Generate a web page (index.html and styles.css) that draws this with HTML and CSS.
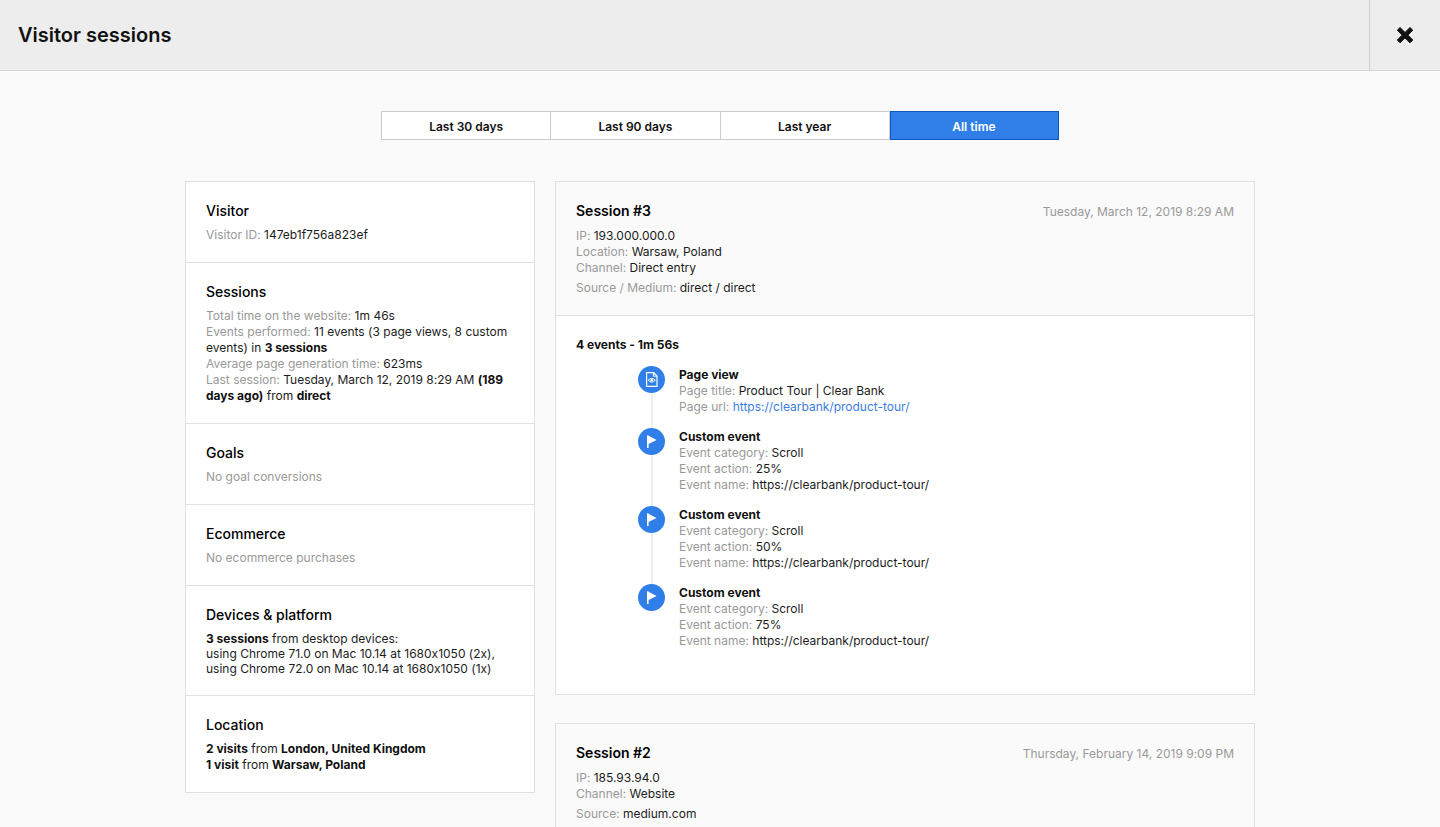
FILE: index.html
```html
<!DOCTYPE html>
<html lang="en">
<head>
<meta charset="utf-8">
<meta name="viewport" content="width=device-width, initial-scale=1">
<title>Visitor sessions</title>
<link rel="stylesheet" href="styles.css">
</head>
<body>
<svg class="sprite" aria-hidden="true">
  <symbol id="icon-flag" viewBox="0 0 27 27">
    <path d="M9 7.2H10.6V20H9Z M10 7.6L18.6 12L10 16.2Z" fill="#fff"/>
  </symbol>
  <symbol id="icon-page" viewBox="0 0 27 27">
    <g fill="none" stroke="#fff">
      <path d="M8.6 6.7H15.6L19 10V20.3H8.6Z" stroke-width="1.2"/>
      <path d="M15.4 6.9V10.2H18.8"/>
      <path d="M10.2 14.2Q13.8 10.4 17.4 14.2Q13.8 18 10.2 14.2Z"/>
    </g>
    <circle cx="13.8" cy="14.2" r="1.3" fill="#fff"/>
  </symbol>
</svg>

<header class="topbar">
  <h1 class="topbar-title">Visitor sessions</h1>
  <button class="close" type="button" aria-label="Close">
    <svg width="18" height="18" viewBox="0 0 18 18" aria-hidden="true"><path d="M4 1.5L9 6.4L14 1.5L16.8 4.2L11.9 9.1L16.8 14L14 16.8L9 11.9L4 16.8L1.3 14L6.2 9.1L1.3 4.2Z" fill="#111" stroke="#111" stroke-linejoin="round"/></svg>
  </button>
</header>

<main class="content">
  <div class="range" role="group" aria-label="Date range">
    <button class="range-item" type="button">Last 30 days</button>
    <button class="range-item" type="button">Last 90 days</button>
    <button class="range-item" type="button">Last year</button>
    <button class="range-item is-active" type="button" aria-pressed="true">All time</button>
  </div>

  <div class="columns">
    <aside class="card summary">
      <section class="section">
        <h2 class="heading">Visitor</h2>
        <p><span class="label">Visitor ID:</span> 147eb1f756a823ef</p>
      </section>
      <section class="section">
        <h2 class="heading">Sessions</h2>
        <p><span class="label">Total time on the website:</span> 1m 46s</p>
        <p><span class="label">Events performed:</span> 11 events (3 page views, 8 custom events) in <b>3 sessions</b></p>
        <p><span class="label">Average page generation time:</span> 623ms</p>
        <p><span class="label">Last session:</span> Tuesday, March 12, 2019 8:29 AM <b>(189 days ago)</b> from <b>direct</b></p>
      </section>
      <section class="section">
        <h2 class="heading">Goals</h2>
        <p class="label">No goal conversions</p>
      </section>
      <section class="section">
        <h2 class="heading">Ecommerce</h2>
        <p class="label">No ecommerce purchases</p>
      </section>
      <section class="section">
        <h2 class="heading">Devices &amp; platform</h2>
        <p><b>3 sessions</b> from desktop devices:</p>
        <ul class="devices">
          <li>using Chrome 71.0 on Mac 10.14 at 1680x1050 (2x),</li>
          <li>using Chrome 72.0 on Mac 10.14 at 1680x1050 (1x)</li>
        </ul>
      </section>
      <section class="section">
        <h2 class="heading">Location</h2>
        <p><b>2 visits</b> from <b>London, United Kingdom</b></p>
        <p><b>1 visit</b> from <b>Warsaw, Poland</b></p>
      </section>
    </aside>

    <div class="sessions">
      <article class="card">
        <header class="session-head">
          <div class="session-title">
            <h2 class="heading strong">Session #3</h2>
            <time class="label" datetime="2019-03-12T08:29">Tuesday, March 12, 2019 8:29 AM</time>
          </div>
          <p><span class="label">IP:</span> 193.000.000.0</p>
          <p><span class="label">Location:</span> Warsaw, Poland</p>
          <p><span class="label">Channel:</span> Direct entry</p>
          <p class="source"><span class="label">Source / Medium:</span> direct / direct</p>
        </header>
        <div class="session-body">
          <h3 class="subheading">4 events - 1m 56s</h3>
          <ol class="events">
            <li class="event">
              <div class="marker"><svg class="marker-icon" aria-hidden="true"><use href="#icon-page"/></svg></div>
              <div class="event-text">
                <h4 class="subheading">Page view</h4>
                <p><span class="label">Page title:</span> Product Tour | Clear Bank</p>
                <p><span class="label">Page url:</span> <a class="link" href="#product-tour">https://clearbank/product-tour/</a></p>
              </div>
            </li>
            <li class="event">
              <div class="marker"><svg class="marker-icon" aria-hidden="true"><use href="#icon-flag"/></svg></div>
              <div class="event-text">
                <h4 class="subheading">Custom event</h4>
                <p><span class="label">Event category:</span> Scroll</p>
                <p><span class="label">Event action:</span> 25%</p>
                <p><span class="label">Event name:</span> https://clearbank/product-tour/</p>
              </div>
            </li>
            <li class="event">
              <div class="marker"><svg class="marker-icon" aria-hidden="true"><use href="#icon-flag"/></svg></div>
              <div class="event-text">
                <h4 class="subheading">Custom event</h4>
                <p><span class="label">Event category:</span> Scroll</p>
                <p><span class="label">Event action:</span> 50%</p>
                <p><span class="label">Event name:</span> https://clearbank/product-tour/</p>
              </div>
            </li>
            <li class="event">
              <div class="marker"><svg class="marker-icon" aria-hidden="true"><use href="#icon-flag"/></svg></div>
              <div class="event-text">
                <h4 class="subheading">Custom event</h4>
                <p><span class="label">Event category:</span> Scroll</p>
                <p><span class="label">Event action:</span> 75%</p>
                <p><span class="label">Event name:</span> https://clearbank/product-tour/</p>
              </div>
            </li>
          </ol>
        </div>
      </article>

      <article class="card">
        <header class="session-head">
          <div class="session-title">
            <h2 class="heading strong">Session #2</h2>
            <time class="label" datetime="2019-02-14T21:09">Thursday, February 14, 2019 9:09 PM</time>
          </div>
          <p><span class="label">IP:</span> 185.93.94.0</p>
          <p><span class="label">Channel:</span> Website</p>
          <p class="source"><span class="label">Source:</span> medium.com</p>
        </header>
      </article>
    </div>
  </div>
</main>
</body>
</html>
```
FILE: styles.css
```css
* { box-sizing: border-box; }

body {
  margin: 0;
  background: #fafafa;
  color: #1c1c1c;
  font: 400 12px/16px Inter, "Liberation Sans", sans-serif;
  font-variant-ligatures: no-contextual;
}

h1, h2, h3, h4, p, ul, ol { margin: 0; padding: 0; }
ul, ol { list-style: none; }
button { font: inherit; color: inherit; cursor: pointer; }
b { font-weight: 700; color: #111; }

.sprite { display: none; }

.topbar {
  display: flex;
  align-items: stretch;
  justify-content: space-between;
  min-height: 71px;
  background: #ededed;
  border-bottom: 1px solid #d5d5d5;
}
.topbar-title {
  align-self: center;
  padding-left: 18px;
  font-size: 20px;
  line-height: 24px;
  font-weight: 600;
  color: #111;
}
.close {
  display: flex;
  align-items: center;
  justify-content: center;
  width: 71px;
  padding: 0;
  background: none;
  border: 0;
  border-left: 1px solid #d0d0d0;
}

.content {
  max-width: 1110px;
  margin: 0 auto;
  padding: 40px 20px;
}

.range {
  display: flex;
  max-width: 678px;
  margin: 0 auto 41px;
}
.range-item {
  flex: 1;
  height: 29px;
  padding: 2px 0 0;
  background: #fff;
  border: 1px solid #ccc;
  font-weight: 600;
  color: #111;
}
.range-item + .range-item { border-left: 0; }
.range-item.is-active {
  background: #307fe8;
  border-color: #0f56c4;
  box-shadow: inset 1px 0 #0f56c4;
  color: #fff;
}

.columns {
  display: grid;
  grid-template-columns: 1fr 2fr;
  gap: 20px;
  align-items: start;
}

.card {
  background: #fff;
  border: 1px solid #e0e0e0;
}
.section { padding: 20px 20px 19px; }
.section + .section { border-top: 1px solid #e0e0e0; }

.heading {
  margin-bottom: 7px;
  font-size: 14px;
  line-height: 18px;
  font-weight: 500;
  color: #000;
}
.heading.strong { margin-bottom: 0; font-weight: 600; }
.label { color: #999; }
.devices {
  margin-top: -1px;
  line-height: 15px;
}

.sessions { display: grid; gap: 28px; }
.session-head {
  padding: 20px 20px 19px;
  background: #fafafa;
}
.session-title {
  display: flex;
  align-items: flex-end;
  justify-content: space-between;
  margin-bottom: 8px;
}
.source { margin-top: 4px; }

.session-body {
  padding: 21px 20px 45px;
  border-top: 1px solid #e0e0e0;
}
.subheading {
  font-size: 12px;
  line-height: 16px;
  font-weight: 700;
  color: #111;
}
.events { padding: 13px 0 0 62px; }
.event { display: flex; gap: 14px; }
.marker {
  display: flex;
  flex-direction: column;
  align-items: center;
}
.marker-icon {
  width: 27px;
  height: 27px;
  border-radius: 50%;
  background: #307fe8;
}
.event:not(:last-child) .marker::after {
  content: "";
  flex: 1;
  width: 2px;
  background: #eee;
}
.event-text { padding-top: 1px; }
.event:not(:last-child) .event-text { padding-bottom: 13px; }
.link { color: #3b7ddd; text-decoration: none; }
```
